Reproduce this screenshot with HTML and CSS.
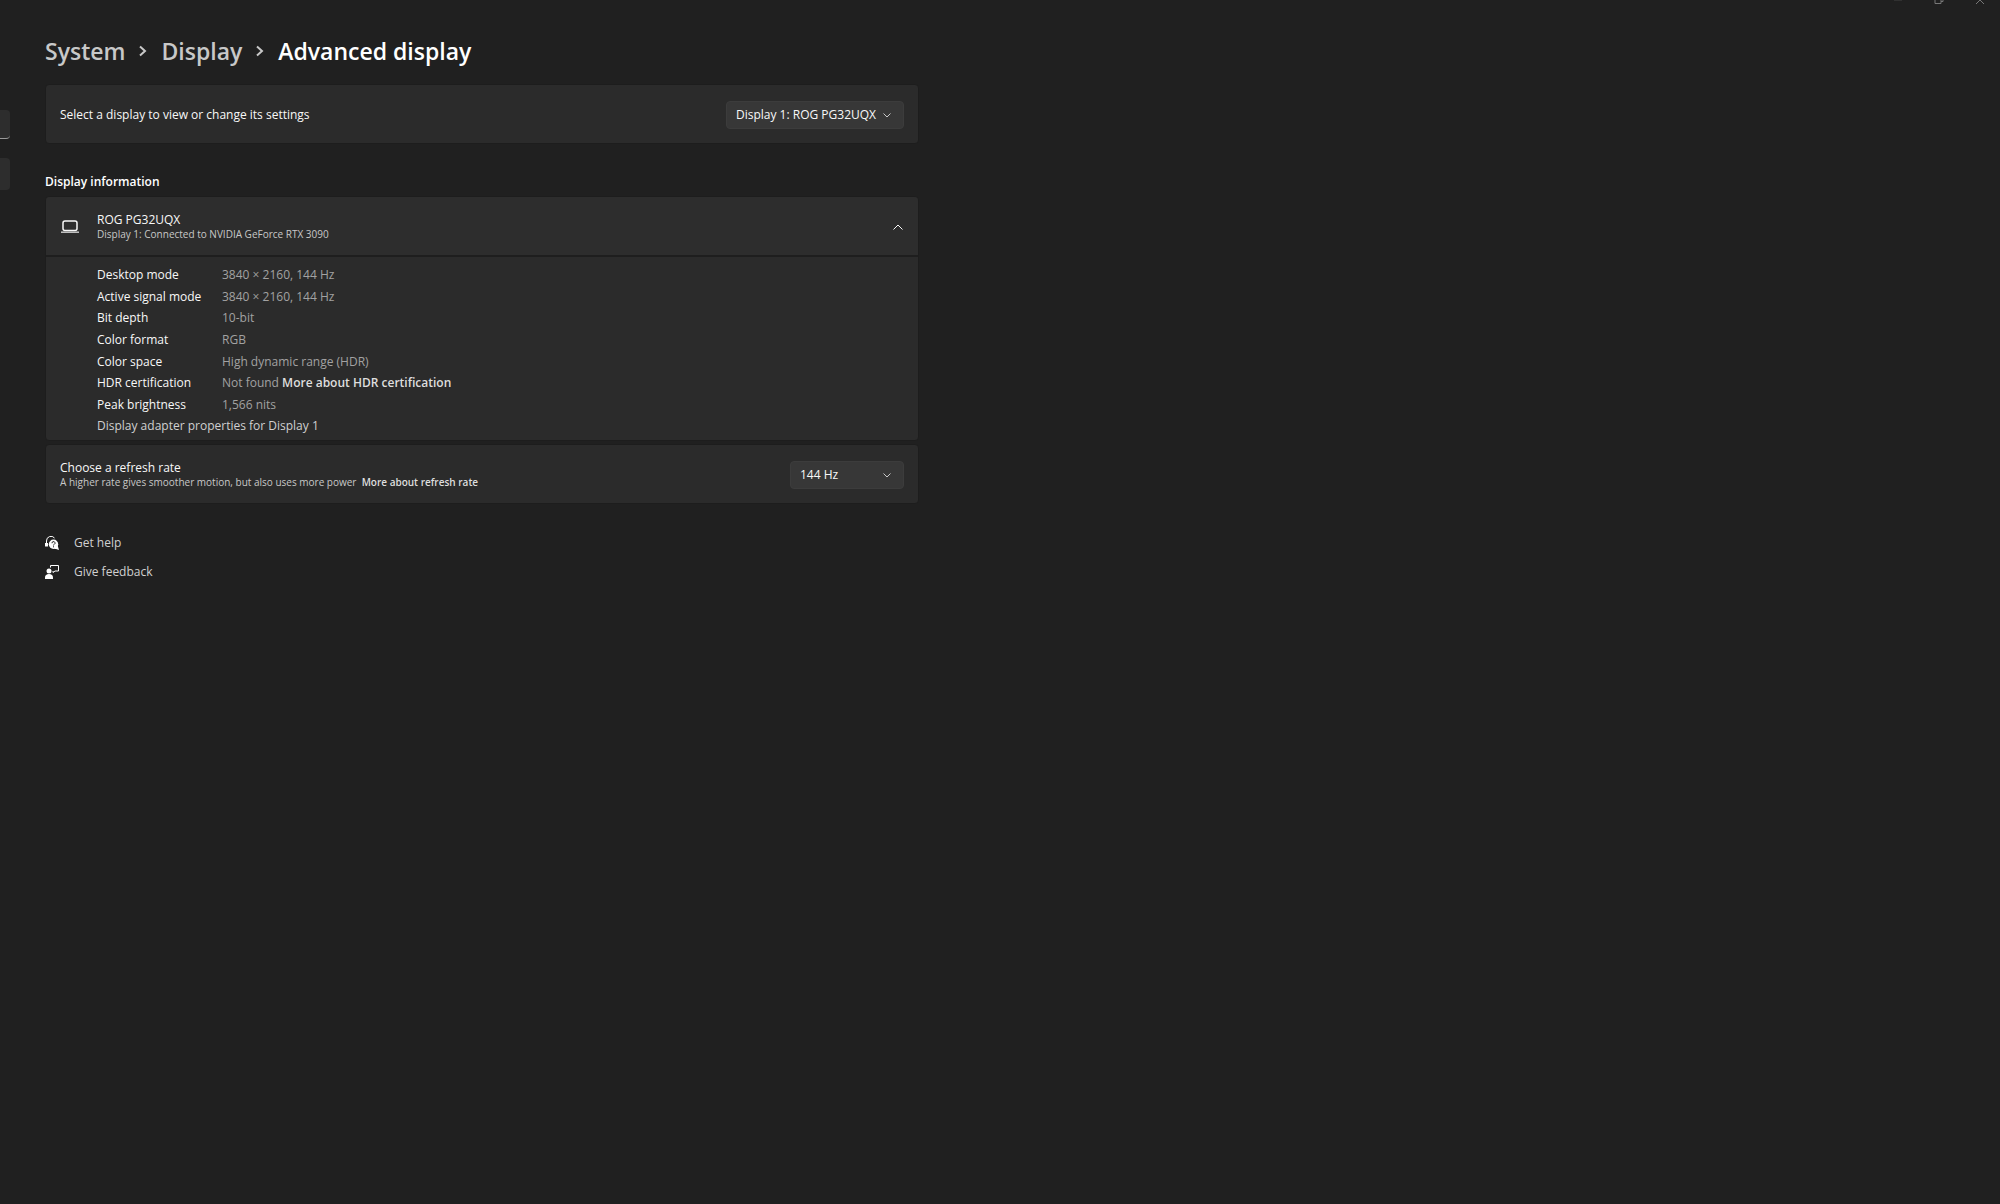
FILE: index.html
```
<!DOCTYPE html>
<html lang="en">
  <head>
    <meta charset="utf-8">
    <title>Advanced display</title>
    <link rel="stylesheet" href="styles.css">
  </head>
  <body>
    <header class="titlebar">
      <button class="caption-btn" type="button" aria-label="Minimize">
        <svg width="10" height="10" viewBox="0 0 10 10"><path d="M1 4.7h8" /></svg>
      </button>
      <button class="caption-btn" type="button" aria-label="Restore">
        <svg width="10" height="10" viewBox="0 0 10 10"><path d="M1 2.5h6v6H1zM3 .5h6v6H7" /></svg>
      </button>
      <button class="caption-btn" type="button" aria-label="Close">
        <svg width="10" height="10" viewBox="0 0 10 10"><path d="M1 1l8 8M9 1L1 9" /></svg>
      </button>
    </header>

    <div class="layout">
      <nav class="sidebar">
        <input class="search" type="text" aria-label="Find a setting">
        <button class="nav-item" type="button" aria-label="System"></button>
      </nav>

      <main class="content">
        <h1 class="breadcrumb">
          <a href="#">System</a>
          <svg width="8" height="12" viewBox="0 0 8 12"><path d="M1 1.5L6 6l-5 4.5" /></svg>
          <a href="#">Display</a>
          <svg width="8" height="12" viewBox="0 0 8 12"><path d="M1 1.5L6 6l-5 4.5" /></svg>
          <span>Advanced display</span>
        </h1>

        <section class="card row">
          <label for="displaySelect">Select a display to view or change its settings</label>
          <div class="select">
            <select id="displaySelect" class="select-wide">
              <option>Display 1: ROG PG32UQX</option>
            </select>
            <svg width="8" height="5" viewBox="0 0 8 5"><path d="M.5.5L4 4 7.5.5" /></svg>
          </div>
        </section>

        <h2 class="section-title">Display information</h2>

        <section class="card info">
          <button class="expander" type="button" aria-expanded="true">
            <svg class="laptop" width="18" height="14" viewBox="0 0 18 14">
              <rect x="2" y="1" width="14" height="9.5" rx="2" />
              <path class="laptop-base" d="M0 12.2h18" />
            </svg>
            <span class="text">
              <span>ROG PG32UQX</span>
              <span class="sub">Display 1: Connected to NVIDIA GeForce RTX 3090</span>
            </span>
            <svg class="chevron-up" width="10" height="6" viewBox="0 0 10 6"><path d="M.5 5.5L5 1l4.5 4.5" /></svg>
          </button>
          <div class="details">
            <dl>
              <dt>Desktop mode</dt>
              <dd>3840 × 2160, 144 Hz</dd>
              <dt>Active signal mode</dt>
              <dd>3840 × 2160, 144 Hz</dd>
              <dt>Bit depth</dt>
              <dd>10-bit</dd>
              <dt>Color format</dt>
              <dd>RGB</dd>
              <dt>Color space</dt>
              <dd>High dynamic range (HDR)</dd>
              <dt>HDR certification</dt>
              <dd>Not found <a class="more" href="#">More about HDR certification</a></dd>
              <dt>Peak brightness</dt>
              <dd>1,566 nits</dd>
            </dl>
            <a class="adapter" href="#">Display adapter properties for Display 1</a>
          </div>
        </section>

        <section class="card row">
          <div class="text">
            <label for="rateSelect">Choose a refresh rate</label>
            <span class="sub">A higher rate gives smoother motion, but also uses more power&nbsp; <a class="more" href="#">More about refresh rate</a></span>
          </div>
          <div class="select">
            <select id="rateSelect" class="select-narrow">
              <option>144 Hz</option>
            </select>
            <svg width="8" height="5" viewBox="0 0 8 5"><path d="M.5.5L4 4 7.5.5" /></svg>
          </div>
        </section>

        <footer class="links">
          <a href="#">
            <svg width="14" height="14" viewBox="0 0 14 14">
              <path class="line" d="M1.5 7.5V5A4.500 4.500 0 0 1 9.500 2" />
              <path class="fill" d="M0 7h3v3.500H0z" />
              <circle class="fill" cx="8.500" cy="8.300" r="4.700" />
              <path class="fill" d="M9 13l3.500-4 1.500 5-3-1z" />
              <path class="mark" d="M7 7.200a1.500 1.500 0 1 1 2.200 1.200q-.7.300-.7 1M8.500 10.300v1" />
            </svg>
            Get help
          </a>
          <a href="#">
            <svg width="14" height="14" viewBox="0 0 14 14">
              <circle class="fill" cx="4" cy="6" r="2.500" />
              <path class="fill" d="M0 14v-1.500C0 10.300 1.500 9 4 9s4 1.300 4 3.500V14z" />
              <path class="line" d="M5.500 2.500v-2h8v5.500H10L8 7.500V6" />
            </svg>
            Give feedback
          </a>
        </footer>
      </main>
    </div>
  </body>
</html>
```
FILE: styles.css
```
* {
  box-sizing: border-box;
  margin: 0;
  padding: 0;
}

body {
  min-height: 100vh;
  background: #202020;
  color: #f8f8f8;
  font-family: "Open Sans", "Noto Sans", sans-serif;
  font-size: 12px;
  line-height: 16px;
}

a {
  color: inherit;
  text-decoration: none;
}

button,
input,
select {
  border: none;
  color: inherit;
  font: inherit;
  text-align: left;
}

svg {
  flex: none;
  fill: none;
  stroke: currentColor;
}

.titlebar {
  display: flex;
  justify-content: flex-end;
  align-items: flex-end;
  height: 5px;
  overflow: hidden;
}

.caption-btn {
  display: flex;
  justify-content: center;
  width: 41px;
  background: none;
  color: #777777;
}

.layout {
  display: flex;
}

.sidebar {
  display: flex;
  flex-direction: column;
  align-items: flex-end;
  gap: 19px;
  width: 10px;
  padding-top: 105px;
  overflow: hidden;
}

.search {
  width: 240px;
  height: 29px;
  background: #2d2d2d;
  border-bottom: 1px solid #9a9a9a;
  border-radius: 4px;
}

.nav-item {
  width: 240px;
  height: 32px;
  background: #2d2d2d;
  border-radius: 4px;
}

.content {
  flex: 1;
  max-width: 909px;
  padding: 30px 0 0 35px;
}

.breadcrumb {
  display: flex;
  align-items: center;
  gap: 14px;
  height: 32px;
  margin-bottom: 17px;
  color: #ffffff;
  font-size: 23px;
  font-weight: 600;
  line-height: 32px;
}

.breadcrumb a,
.breadcrumb svg {
  color: #c8c8c8;
}

.breadcrumb svg {
  stroke-width: 2;
}

.card {
  background: #2b2b2b;
  border: 1px solid #1d1d1d;
  border-radius: 4px;
}

.row {
  display: flex;
  justify-content: space-between;
  align-items: center;
  height: 60px;
  padding: 1px 14px 0;
}

.select {
  position: relative;
}

.select select {
  display: block;
  height: 28px;
  padding: 0 9px;
  background: #373737;
  border: 1px solid #3c3c3c;
  border-radius: 4px;
  appearance: none;
}

.select svg {
  position: absolute;
  top: 12px;
  right: 13px;
  color: #c8c8c8;
  pointer-events: none;
}

.select-wide {
  width: 178px;
}

.select-narrow {
  width: 114px;
}

.section-title {
  margin: 30px 0 6px;
  color: #ffffff;
  font-size: 12px;
  font-weight: 600;
  line-height: 16px;
}

.info {
  margin-bottom: 3px;
}

.expander {
  display: flex;
  align-items: center;
  width: 100%;
  height: 60px;
  padding: 2px 15px 0;
  background: #2d2d2d;
  border-bottom: 2px solid #1e1e1e;
  border-radius: 4px 4px 0 0;
}

.laptop {
  margin-right: 18px;
  stroke-width: 1.5;
}

.laptop-base {
  color: #c8c8c8;
}

.text {
  display: flex;
  flex-direction: column;
  line-height: 15px;
}

.sub {
  color: #c8c8c8;
  font-size: 10px;
}

.chevron-up {
  margin-left: auto;
}

.details {
  padding: 7px 0 4px 51px;
  line-height: 21px;
}

.details dl {
  display: grid;
  grid-template-columns: 125px 1fr;
  align-content: space-between;
  min-height: 151px;
}

.details dd {
  color: #a2a2a2;
}

.more {
  color: #dedede;
  font-weight: 600;
}

.adapter {
  display: block;
  color: #d0d0d0;
}

.links {
  display: flex;
  flex-direction: column;
  align-items: flex-start;
  gap: 13px;
  margin-top: 31px;
  color: #d0d0d0;
}

.links a {
  display: flex;
  align-items: center;
  gap: 15px;
}

.links svg {
  color: #ffffff;
}

.links .fill {
  fill: currentColor;
  stroke: none;
}

.links .mark {
  stroke: #202020;
}
```
